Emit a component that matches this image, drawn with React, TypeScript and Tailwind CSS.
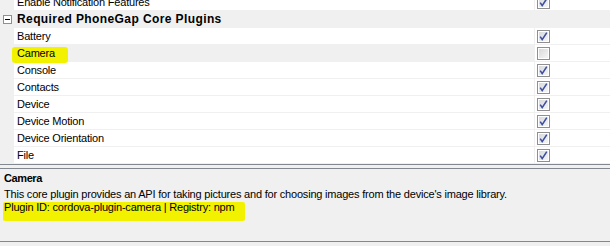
const rows: { name: string; checked: boolean; selected?: boolean }[] = [
  { name: "Battery", checked: true },
  { name: "Camera", checked: false, selected: true },
  { name: "Console", checked: true },
  { name: "Contacts", checked: true },
  { name: "Device", checked: true },
  { name: "Device Motion", checked: true },
  { name: "Device Orientation", checked: true },
  { name: "File", checked: true },
];

function CheckBox({ checked }: { checked: boolean }) {
  return (
    <svg width="13" height="13" viewBox="0 0 13 13">
      <defs>
        <linearGradient id="cbg" x1="0" y1="0" x2="1" y2="1">
          <stop offset="0" stopColor="#d8d9db" />
          <stop offset="1" stopColor="#f6f6f6" />
        </linearGradient>
      </defs>
      <rect x="0.5" y="0.5" width="12" height="12" fill="#fff" stroke="#8f8f8f" />
      <rect x="2" y="2" width="9" height="9" fill="url(#cbg)" />
      {checked && (
        <path d="M3.2 6.6 L5.2 9.6 L9.8 2.6" fill="none" stroke="#3c4ea0" strokeWidth="1.6" />
      )}
    </svg>
  );
}

function Row({ name, checked, selected }: { name: string; checked: boolean; selected?: boolean }) {
  return (
    <div className="flex h-[17px] border-b border-[#f0f0f0]">
      <div className="w-[14px] shrink-0 bg-[#f0f0f0]" />
      <div className={`flex w-[520px] items-center pl-[3px] ${selected ? "bg-[#f0f0f0]" : "bg-white"}`}>
        <span className="relative z-10">{name}</span>
      </div>
      <div className="w-px bg-[#f0f0f0]" />
      <div className="flex flex-1 items-center bg-white pl-[2px]">
        <CheckBox checked={checked} />
      </div>
    </div>
  );
}

export default function App() {
  return (
    <div
      className="relative h-[246px] w-[610px] overflow-hidden bg-[#f0f0f0] text-[11px] leading-[13px] tracking-[-0.2px] text-black"
      style={{ fontFamily: '"Liberation Sans", Arial, sans-serif' }}
    >
      {/* highlighter marks */}
      <div className="absolute left-[12px] top-[47px] h-[16px] w-[56px] rounded-[3px] bg-[#f2f200]" />
      <div className="absolute left-[3px] top-[202px] h-[19px] w-[242px] rounded-[2px] bg-[#f2f200]" />

      <div className="-mt-[6px]">
        <Row name="Enable Notification Features" checked />
        <div className="flex h-[17px] items-center border-b border-[#f0f0f0] bg-[#f0f0f0]">
          <div className="flex w-[14px] justify-center">
            <div className="flex h-[9px] w-[9px] items-center justify-center border border-[#8f8f8f] bg-white">
              <div className="h-px w-[5px] bg-black" />
            </div>
          </div>
          <span className="pl-[3px] text-[12px] font-bold tracking-[0.4px]">Required PhoneGap Core Plugins</span>
        </div>
        {rows.map((r) => (
          <Row key={r.name} {...r} />
        ))}
      </div>
      <div className="h-px bg-[#828790]" />
      <div className="relative mt-[3px] h-[74px] border-y border-[#828790] px-[4px] pt-[3px]">
        <div className="font-bold tracking-[-0.4px]">Camera</div>
        <div className="mt-[3px]">
          This core plugin provides an API for taking pictures and for choosing images from the device's image library.
        </div>
        <div>Plugin ID: cordova-plugin-camera | Registry: npm</div>
      </div>
    </div>
  );
}
